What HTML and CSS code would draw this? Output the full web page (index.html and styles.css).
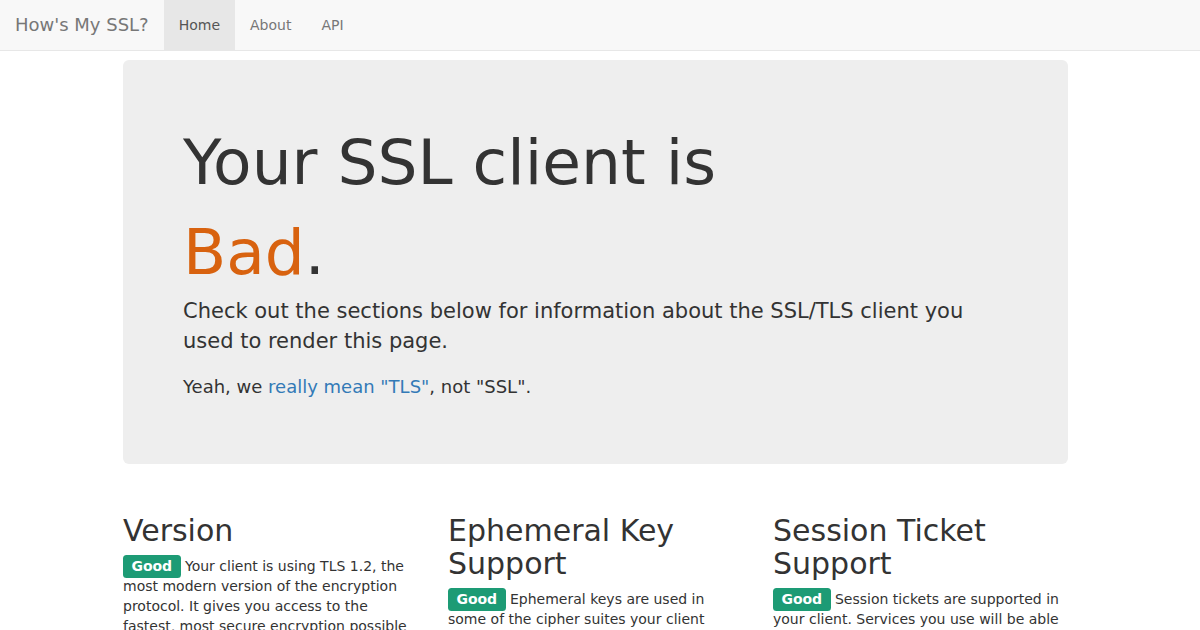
FILE: index.html
```html
<!DOCTYPE html>
<html lang="en">
<head>
    <meta charset="UTF-8">
    <meta name="viewport" content="width=device-width, initial-scale=1.0">
    <title>How's My SSL?</title>
    <link rel="stylesheet" href="styles.css">
</head>
<body>
    <nav class="navbar">
        <a class="brand" href="#">How's My SSL?</a>
        <ul class="nav">
            <li class="active"><a href="#">Home</a></li>
            <li><a href="#">About</a></li>
            <li><a href="#">API</a></li>
        </ul>
    </nav>

    <div class="container">
        <div class="jumbotron">
            <h1>Your SSL client is <span class="rating-bad">Bad</span>.</h1>
            <p class="lead">Check out the sections below for information about the SSL/TLS client you used to render this page.</p>
            <p class="small-lead">Yeah, we <a href="#">really mean "TLS"</a>, not "SSL".</p>
        </div>

        <div class="row">
            <div class="col">
                <h2>Version</h2>
                <p><span class="label good">Good</span> Your client is using TLS 1.2, the most modern version of the encryption protocol. It gives you access to the fastest, most secure encryption possible on the web.</p>
            </div>
            <div class="col">
                <h2>Ephemeral Key Support</h2>
                <p><span class="label good">Good</span> Ephemeral keys are used in some of the cipher suites your client supports. This means your client may be used to provide forward secrecy if the server supports it.</p>
            </div>
            <div class="col">
                <h2>Session Ticket Support</h2>
                <p><span class="label good">Good</span> Session tickets are supported in your client. Services you use will be able to scale out their TLS connections more easily with this feature.</p>
            </div>
        </div>
    </div>
</body>
</html>
```

FILE: styles.css
```css
body { font-family: "DejaVu Sans", sans-serif; font-size: 14px; line-height: 1.42857; color: #333; background: #fff; margin: 0; }
a { color: #337ab7; text-decoration: none; }

.navbar { display: flex; height: 50px; background: #f8f8f8; border-bottom: 1px solid #e7e7e7; margin-bottom: 9px; }
.brand { padding: 15px; font-size: 18px; line-height: 20px; color: #777; }
.nav { display: flex; list-style: none; margin: 0; padding: 0; }
.nav a { display: block; padding: 15px; line-height: 20px; color: #777; }
.nav .active a { background: #e7e7e7; color: #555; }

.container { width: 945px; margin-left: 123px; }

.jumbotron { background: #eee; border-radius: 6px; padding: 48px 60px 64px; margin-bottom: 30px; }
.jumbotron h1 { max-width: 620px; font-size: 63px; font-weight: normal; line-height: 90px; margin: 10px 0 0; }
.rating-bad { color: #d8620f; }
.jumbotron .lead { font-size: 21px; line-height: 30px; margin: -2px 0 18px; }
.jumbotron .small-lead { font-size: 18px; line-height: 26px; margin: 0; }

.row { display: grid; grid-template-columns: repeat(3, 1fr); gap: 30px; }
.col h2 { font-size: 30px; font-weight: normal; line-height: 1.1; margin: 20px 0 10px; }
.col p { margin: 0 0 10px; }
.label { font-size: 100%; font-weight: bold; color: #fff; padding: .2em .6em .3em; border-radius: .25em; line-height: 1; }
.label.good { background: #1d9b75; }
```
